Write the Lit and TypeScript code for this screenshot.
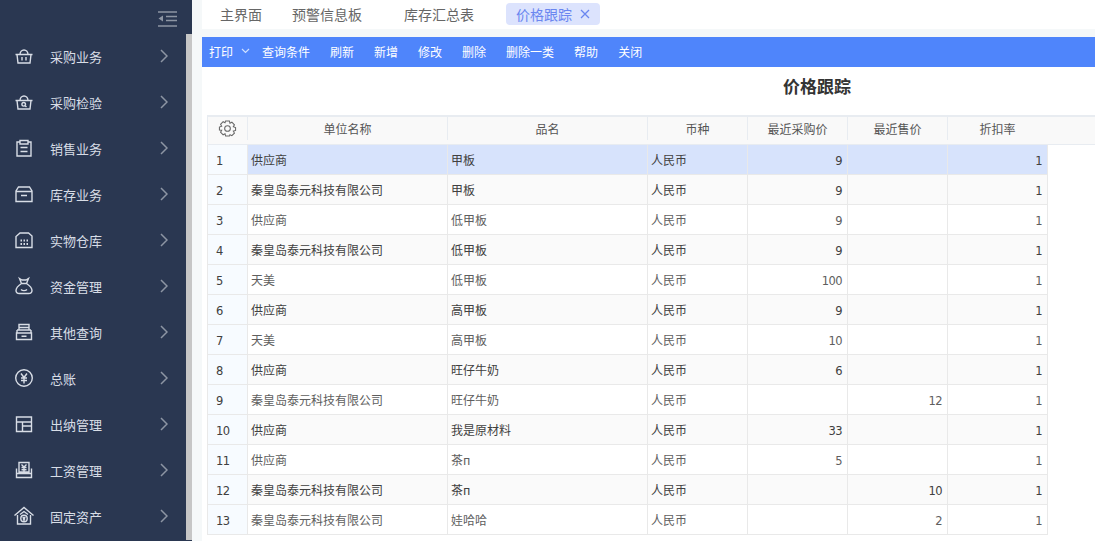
import { LitElement, html, css, svg } from 'lit';
import { customElement } from 'lit/decorators.js';

const icon = (body: unknown) => html`<svg class="mi" viewBox="0 0 20 20" fill="none" stroke="currentColor" stroke-width="1.4">${body}</svg>`;

const menus = [
  ['采购业务', svg`<path d="M1.500 8.500h17M3 8.500l1 8.500h12l1-8.500M6 8.500a4 4.500 0 0 1 8 0M8 11v3.500M12 11v3.500"/>`],
  ['采购检验', svg`<path d="M1.500 8.500h17M3 8.500l1 8.500h12l1-8.500M6 8.500a4 4.500 0 0 1 8 0"/><circle cx="9.700" cy="12.300" r="1.800"/><path d="M11 13.700l1.500 1.200"/>`],
  ['销售业务', svg`<path d="M6 4H3v14h14V4h-3M6 2.500h8V6H6zM6.500 9.500h7M6.500 13.500h7"/>`],
  ['库存业务', svg`<path d="M4.500 3h11L18 7v10.500H2V7zM2 7.500h16M7 11.500h6"/>`],
  ['实物仓库', svg`<path d="M2 17.500V6.500L6 3h8.500L18 6v11.500z"/><path d="M6.500 10.500h1.500M9.500 10.500h1.500M12.500 10.500h1.500M6.500 14h1.500M9.500 14h1.500M12.500 14h1.500" stroke-width="1.800"/>`],
  ['资金管理', svg`<path d="M5.500 2.500l2.500 1.500h4l2.500-1.500-2 5h-5zM7.500 7.500C4.500 9.500 2 12 2 14.500c0 2 1.500 3 3.500 3h9c2 0 3.500-1 3.500-3 0-2.500-2.500-5-5.500-7M7 13.500c1.500 1.500 4.500 1.500 6 0"/>`],
  ['其他查询', svg`<path d="M5 2.500h10V8H5zM3 8h14M2.500 11h15v6.500h-15zM5.500 5.500h9M7.500 14.300h5M3 8v3M17 8v3"/>`],
  ['总账', svg`<circle cx="10" cy="10" r="8.300"/><path d="M7 5.500l3 4 3-4M7 10h6M7 12.500h6M10 9.500v6"/>`],
  ['出纳管理', svg`<path d="M2.500 3h15v14.500h-15zM2.500 8h15M8.500 8v9.500M8.500 12h9"/>`],
  ['工资管理', svg`<path d="M5 2.500h10V12H5zM2.500 8.500v9h15v-9M2.500 13.500h15M7.500 4.500L10 7l2.500-2.500M7.500 7.500h5M7.500 9.800h5M10 7v4.500"/>`],
  ['固定资产', svg`<path d="M.5 9.500L10 1.500l9.500 8M3.500 9v9h13V9M6 8.500l4-3 4 3"/><circle cx="10" cy="12.500" r="3.200"/><path d="M8.800 11l1.200 1.500 1.200-1.500M8.800 13h2.400M10 12.500V15"/>`],
] as [string, unknown][];

const toolbar = ['查询条件', '刷新', '新增', '修改', '删除', '删除一类', '帮助', '关闭'];

const A = '秦皇岛泰元科技有限公司';
const rows: [string, string, string, string, string][] = [
  ['供应商', '甲板', '9', '', '1'],
  [A, '甲板', '9', '', '1'],
  ['供应商', '低甲板', '9', '', '1'],
  [A, '低甲板', '9', '', '1'],
  ['天美', '低甲板', '100', '', '1'],
  ['供应商', '高甲板', '9', '', '1'],
  ['天美', '高甲板', '10', '', '1'],
  ['供应商', '旺仔牛奶', '6', '', '1'],
  [A, '旺仔牛奶', '', '12', '1'],
  ['供应商', '我是原材料', '33', '', '1'],
  ['供应商', '茶п', '5', '', '1'],
  [A, '茶п', '', '10', '1'],
  [A, '娃哈哈', '', '2', '1'],
];

@customElement('app-root')
export class AppRoot extends LitElement {
  static styles = css`
    :host {
      display: flex;
      width: 1095px;
      height: 541px;
      overflow: hidden;
      background: #f5f8f9;
      font-family: 'Noto Sans CJK SC', 'Noto Sans', sans-serif;
      font-size: 12px;
      color: #333;
    }

    .side {
      width: 192px;
      flex: none;
      background: #2a3751;
      color: #d8dde6;
    }
    .collapse {
      height: 34px;
      display: flex;
      justify-content: flex-end;
      padding: 11px 15px 0 0;
      box-sizing: border-box;
      color: #8d95a3;
    }
    .body {
      display: flex;
    }
    .list {
      flex: 1;
    }
    .menu {
      display: flex;
      align-items: center;
      height: 46px;
      box-sizing: border-box;
      padding: 0 0 2px 14px;
      font-size: 13px;
    }
    .mi {
      width: 20px;
      height: 20px;
      flex: none;
      margin-right: 16px;
    }
    .menu span {
      flex: 1;
    }
    .arrow {
      width: 8px;
      height: 14px;
      margin-right: 18px;
      color: #8d95a3;
    }

    .scroll {
      width: 6px;
      flex: none;
      background: #c6c6c6;
    }
    .gutter {
      width: 10px;
      flex: none;
    }

    .main {
      flex: 1;
      min-width: 0;
      background: #fff;
    }
    .tabs {
      height: 29px;
      box-sizing: border-box;
      padding-bottom: 2px;
      display: flex;
      align-items: center;
      font-size: 14px;
      color: #666;
    }
    .tab {
      flex: none;
    }
    .tab.on {
      display: flex;
      align-items: center;
      gap: 8px;
      height: 22px;
      padding: 0 10px;
      box-sizing: border-box;
      border-radius: 4px;
      background: #dce3fd;
      color: #6a86f0;
    }
    .tab.on svg {
      width: 10px;
      height: 10px;
    }
    .band {
      height: 8px;
      background: #f5f8f9;
    }
    .bar {
      height: 30px;
      box-sizing: border-box;
      padding: 0 0 2px 7px;
      display: flex;
      align-items: center;
      background: #4f85fb;
      color: #fff;
    }
    .bar span {
      margin-right: 20px;
    }
    .bar .print {
      margin-right: 8px;
    }
    .bar svg {
      width: 9px;
      height: 6px;
      margin-right: 12px;
      color: #cfe0ff;
    }
    h1 {
      margin: 0;
      height: 48px;
      line-height: 38px;
      padding-left: 581px;
      font-size: 17px;
      font-weight: 700;
      color: #333;
    }
    .wrap {
      padding-left: 5px;
    }
    .head,
    .row {
      display: grid;
      grid-template-columns: 40px 200px 200px 100px 100px 100px 100px;
      box-sizing: border-box;
    }
    .head {
      height: 30px;
      background: #f9f9f9;
      border-top: 2px solid #e8ecf1;
      border-bottom: 1px solid #e8ecf1;
    }
    .head div {
      display: flex;
      align-items: center;
      justify-content: center;
      border-left: 1px solid #e8ecf1;
      color: #555;
    }
    .head svg {
      width: 19px;
      height: 19px;
      color: #666;
    }
    .row {
      height: 30px;
      width: 841px;
      background: #fff;
      border-right: 1px solid #e9e9e9;
      border-bottom: 1px solid #e9e9e9;
    }
    .row.even {
      background: #fafafa;
    }
    .row.sel {
      background: #d7e3fc;
    }
    .row div {
      display: flex;
      align-items: center;
      padding: 0 3px;
      border-left: 1px solid #e9e9e9;
      color: #5e5e5e;
      overflow: hidden;
      white-space: nowrap;
    }
    .row.even div,
    .row.sel div {
      color: #404040;
    }
    .row .no {
      padding: 2px 0 0 8px;
      background: #f7fbff;
      font-family: 'DejaVu Sans', sans-serif;
      font-size: 11.5px;
      letter-spacing: -0.6px;
      color: #404040;
    }
    .row .num {
      justify-content: flex-end;
      padding: 2px 5px 0 3px;
      font-family: 'DejaVu Sans', sans-serif;
      font-size: 11.5px;
      letter-spacing: -0.6px;
    }
  `;

  render() {
    return html`
      <nav class="side">
        <div class="collapse">
          <svg width="20" height="16" viewBox="0 0 20 16" fill="none" stroke="currentColor" stroke-width="1.3">
            <path d="M1 1h19M9 5.500h11M9 9.500h11M1 15h19"/>
            <path d="M6 4.500v6L1.500 7.500z" fill="currentColor" stroke="none"/>
          </svg>
        </div>
        <div class="body">
          <div class="list">
            ${menus.map(
              ([name, body]) => html`
                <div class="menu">
                  ${icon(body)}
                  <span>${name}</span>
                  <svg class="arrow" viewBox="0 0 8 14" fill="none" stroke="currentColor" stroke-width="1.500"><path d="M1 1l6 6-6 6"/></svg>
                </div>
              `
            )}
          </div>
          <div class="scroll"></div>
        </div>
      </nav>
      <div class="gutter"></div>
      <main class="main">
        <div class="tabs">
          <span class="tab" style="margin-left:18px">主界面</span>
          <span class="tab" style="margin-left:30px">预警信息板</span>
          <span class="tab" style="margin-left:42px">库存汇总表</span>
          <span class="tab on" style="margin-left:32px">价格跟踪
            <svg viewBox="0 0 10 10" fill="none" stroke="currentColor" stroke-width="1.300"><path d="M1 1l8 8M9 1l-8 8"/></svg>
          </span>
        </div>
        <div class="band"></div>
        <div class="bar">
          <span class="print">打印</span>
          <svg viewBox="0 0 9 6" fill="none" stroke="currentColor" stroke-width="1.200"><path d="M1 1l3.500 3.500L8 1"/></svg>
          ${toolbar.map((t) => html`<span>${t}</span>`)}
        </div>
        <h1>价格跟踪</h1>
        <div class="wrap">
          <div class="head">
            <div>
              <svg viewBox="0 0 20 20" fill="none" stroke="currentColor" stroke-width="1.100">
                <path d="M8 2h4l.6 2.400 2-1 2.700 2.800-1.200 2 2.400.8v3l-2.400.8 1.200 2-2.700 2.800-2-1L12 18H8l-.6-2.400-2 1-2.700-2.800 1.200-2L1.500 11.500v-3l2.400-.8-1.200-2 2.700-2.800 2 1z"/>
                <circle cx="10" cy="10" r="3"/>
              </svg>
            </div>
            ${['单位名称', '品名', '币种', '最近采购价', '最近售价', '折扣率'].map((t) => html`<div>${t}</div>`)}
            <div></div>
          </div>
          ${rows.map(
            (r, i) => html`
              <div class="row ${i === 0 ? 'sel' : i % 2 ? 'even' : ''}">
                <div class="no">${i + 1}</div>
                <div>${r[0]}</div>
                <div>${r[1]}</div>
                <div>人民币</div>
                <div class="num">${r[2]}</div>
                <div class="num">${r[3]}</div>
                <div class="num">${r[4]}</div>
              </div>
            `
          )}
        </div>
      </main>
    `;
  }
}
